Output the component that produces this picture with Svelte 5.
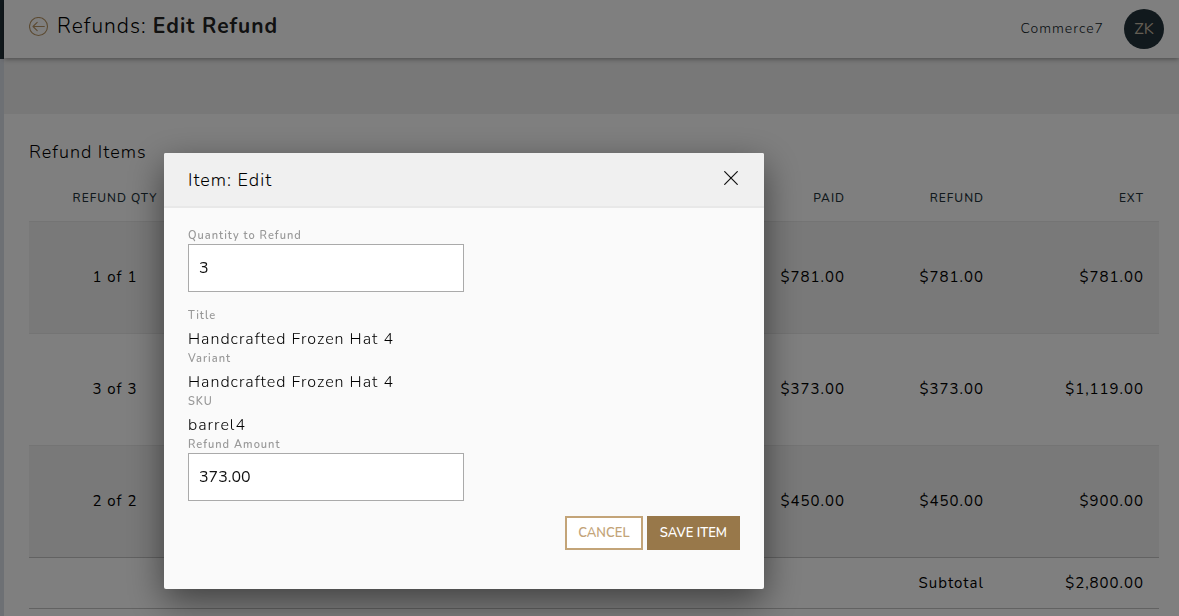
<script>
  const rows = [
    { qty: '1 of 1', paid: '$781.00', refund: '$781.00', ext: '$781.00' },
    { qty: '3 of 3', paid: '$373.00', refund: '$373.00', ext: '$1,119.00' },
    { qty: '2 of 2', paid: '$450.00', refund: '$450.00', ext: '$900.00' }
  ];

  const details = [
    { label: 'Title', value: 'Handcrafted Frozen Hat 4' },
    { label: 'Variant', value: 'Handcrafted Frozen Hat 4' },
    { label: 'SKU', value: 'barrel4' }
  ];

  let quantity = $state('3');
  let amount = $state('373.00');
</script>

<div class="page">
  <aside class="rail"><div class="rail-top"></div></aside>
  <div class="main">
    <header class="topbar">
      <a class="back" href="#refunds" aria-label="Back">
        <svg width="20" height="20" viewBox="0 0 20 20" fill="none" stroke="#b89564" stroke-width="1.1" stroke-linecap="round" stroke-linejoin="round">
          <circle cx="9.5" cy="9.5" r="9" />
          <path d="M15.3 9.5H4M8.2 5.3L4 9.5l4.2 4.2" />
        </svg>
      </a>
      <h1>Refunds: <strong>Edit Refund</strong></h1>
      <span class="tenant">Commerce7</span>
      <button class="avatar" type="button">ZK</button>
    </header>
    <div class="band"></div>
    <section class="content">
      <h2>Refund Items</h2>
      <table>
        <thead>
          <tr><th class="qty">REFUND QTY</th><th>PAID</th><th class="refund">REFUND</th><th class="ext">EXT</th></tr>
        </thead>
        <tbody>
          {#each rows as row}
            <tr>
              <td class="qty">{row.qty}</td><td>{row.paid}</td><td>{row.refund}</td><td>{row.ext}</td>
            </tr>
          {/each}
        </tbody>
        <tfoot>
          <tr><td></td><td></td><td>Subtotal</td><td>$2,800.00</td></tr>
        </tfoot>
      </table>
    </section>
  </div>
</div>

<div class="overlay">
  <div class="modal" role="dialog" aria-modal="true" aria-labelledby="dialog-title">
    <header class="modal-head">
      <h2 id="dialog-title">Item: Edit</h2>
      <button class="close" type="button" aria-label="Close">
        <svg width="14" height="14" viewBox="0 0 14 14" fill="none" stroke="#111" stroke-width="1.2" stroke-linecap="round">
          <path d="M.7.7l12.6 12.6M13.3.7L.7 13.3" />
        </svg>
      </button>
    </header>
    <form class="modal-body" onsubmit={(e) => e.preventDefault()}>
      <div class="field first">
        <label for="quantity">Quantity to Refund</label>
        <input id="quantity" type="text" bind:value={quantity} />
      </div>
      <dl>
        {#each details as d}
          <dt>{d.label}</dt>
          <dd>{d.value}</dd>
        {/each}
      </dl>
      <div class="field">
        <label for="amount">Refund Amount</label>
        <input id="amount" type="text" bind:value={amount} />
      </div>
      <div class="actions">
        <button class="btn ghost" type="button">CANCEL</button>
        <button class="btn solid" type="submit">SAVE ITEM</button>
      </div>
    </form>
  </div>
</div>

<style>
  :global(body) {
    font-family: Nunito, 'Open Sans', sans-serif;
    font-size: 15px;
    letter-spacing: 1px;
    color: #000;
    background: #fff;
    overflow: hidden;
  }
  * { box-sizing: border-box; }
  button, input { font-family: inherit; letter-spacing: normal; }
  h1, h2, dl, dd { margin: 0; }

  .page { display: flex; min-height: 100vh; }
  .rail { width: 4px; flex: none; background: #dbe0e8; }
  .rail-top { height: 59px; background: #22323a; }
  .main { flex: 1; min-width: 0; }

  .topbar {
    position: relative;
    display: flex;
    align-items: center;
    height: 58px;
    padding: 0 15px 0 25px;
    background: #fff;
    box-shadow: 0 1px 5px rgba(0, 0, 0, 0.4);
  }
  .back { display: flex; margin: 0 8px 4px 0; }
  h1 { flex: 1; padding-bottom: 6px; font-size: 21px; line-height: 28px; font-weight: 300; }
  h1 strong { font-weight: 700; color: #222; }
  .tenant { margin-right: 20px; padding-bottom: 1px; font-size: 14px; font-weight: 300; color: #101a1f; }
  .avatar {
    width: 40px;
    height: 40px;
    padding: 0;
    border: 0;
    border-radius: 50%;
    background: #22323a;
    color: #c9bda8;
    font-size: 16px;
  }
  .band { height: 56px; background: #f0f0f0; }

  .content { padding: 24px 20px 24px 25px; }
  h2 { font-size: 18px; line-height: 28px; font-weight: 300; }

  table { width: 100%; margin-top: 8px; border-collapse: collapse; table-layout: fixed; }
  th, td { padding: 0 15px; text-align: right; }
  th { height: 47px; padding-top: 1px; font-size: 12px; font-weight: 500; color: #22323a; }
  td { height: 112px; }
  .qty { width: 172px; text-align: center; }
  .refund { width: 139px; }
  .ext { width: 160px; }
  tbody tr { border-top: 1px solid #e8e8e8; }
  tbody tr:nth-child(odd) { background: #f3f3f3; }
  tfoot tr { border-top: 1px solid #c4c4c4; border-bottom: 1px solid #c4c4c4; }
  tfoot td { height: 51px; }

  .overlay {
    position: fixed;
    inset: 0;
    padding: 153px 0 0 164px;
    background: rgba(0, 0, 0, 0.5);
  }
  .modal {
    width: 600px;
    max-width: 100%;
    border-radius: 2px;
    background: #fafafa;
    box-shadow: 0 12px 36px rgba(0, 0, 0, 0.5);
    overflow: hidden;
  }
  .modal-head {
    display: flex;
    align-items: center;
    justify-content: space-between;
    height: 55px;
    padding: 0 24px;
    background: #f0f0f0;
    border-bottom: 2px solid #e8e8e8;
  }
  .close { display: flex; padding: 0 2px 4px; border: 0; background: none; }
  .modal-body { padding: 19px 24px 39px; }
  .field { display: flex; flex-direction: column; }
  .first { margin-bottom: 15px; }
  label, dt { font-size: 11px; line-height: 17px; font-weight: 600; color: #999; }
  dd { height: 26px; font-size: 16px; line-height: 31px; font-weight: 300; }
  input {
    width: 276px;
    height: 48px;
    padding: 0 10px;
    border: 1px solid #aaa;
    border-radius: 0;
    background: #fff;
    color: #111;
    font-size: 16px;
    font-weight: 400;
  }
  .actions { display: flex; justify-content: flex-end; gap: 4px; margin-top: 15px; }
  .btn { height: 34px; padding: 0 11px; border: 2px solid; font-size: 13px; font-weight: 600; }
  .ghost { border-color: #c3a478; background: #fff; color: #c3a478; }
  .solid { border-color: #98784a; background: #98784a; color: #fff; }
</style>
